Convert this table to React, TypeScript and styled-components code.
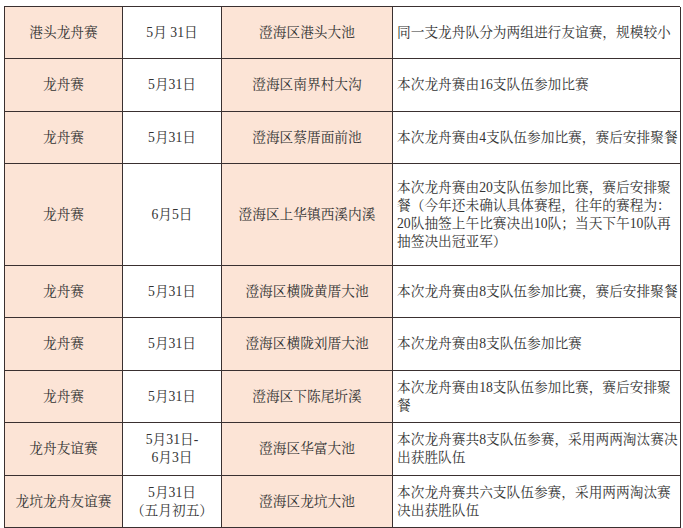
import React from "react";
import styled, { createGlobalStyle } from "styled-components";

const Global = createGlobalStyle`
  html, body { margin: 0; padding: 0; background: #ffffff; }
  body {
    font-family: "Liberation Serif", "Noto Serif CJK SC", "Noto Sans CJK SC", serif;
    color: #333333;
  }
`;

const Page = styled.div`
  padding: 6px 0 0 4px;
`;

const Grid = styled.div<{ $rows: number[] }>`
  display: grid;
  grid-template-columns: 118px 99px 171px 288px;
  grid-template-rows: ${(p) => p.$rows.map((h) => `${h}px`).join(" ")};
  width: 676px;
  box-sizing: border-box;
  border-top: 1px solid #3a3030;
  border-left: 1px solid #3a3030;
  font-size: 13.7px;
  line-height: 18px;
`;

const Cell = styled.div<{ $pink?: boolean; $left?: boolean }>`
  display: flex;
  align-items: center;
  justify-content: ${(p) => (p.$left ? "flex-start" : "center")};
  text-align: ${(p) => (p.$left ? "left" : "center")};
  box-sizing: border-box;
  border-right: 1px solid #3a3030;
  border-bottom: 1px solid #3a3030;
  background: ${(p) => (p.$pink ? "#fce4d6" : "#ffffff")};
  padding: ${(p) => (p.$left ? "0 0 0 4px" : "0 2px")};
  white-space: nowrap;
  overflow: hidden;
  color: #333333;
`;

type R = { h: number; name: string; date: string[]; place: string; desc: string[] };

const rows: R[] = [
  { h: 52, name: "港头龙舟赛", date: ["5月 31日"], place: "澄海区港头大池", desc: ["同一支龙舟队分为两组进行友谊赛，规模较小"] },
  { h: 53, name: "龙舟赛", date: ["5月31日"], place: "澄海区南界村大沟", desc: ["本次龙舟赛由16支队伍参加比赛"] },
  { h: 52, name: "龙舟赛", date: ["5月31日"], place: "澄海区蔡厝面前池", desc: ["本次龙舟赛由4支队伍参加比赛，赛后安排聚餐"] },
  {
    h: 102,
    name: "龙舟赛",
    date: ["6月5日"],
    place: "澄海区上华镇西溪内溪",
    desc: [
      "本次龙舟赛由20支队伍参加比赛，赛后安排聚",
      "餐（今年还未确认具体赛程，往年的赛程为：",
      "20队抽签上午比赛决出10队；当天下午10队再",
      "抽签决出冠亚军）",
    ],
  },
  { h: 52, name: "龙舟赛", date: ["5月31日"], place: "澄海区横陇黄厝大池", desc: ["本次龙舟赛由8支队伍参加比赛，赛后安排聚餐"] },
  { h: 53, name: "龙舟赛", date: ["5月31日"], place: "澄海区横陇刘厝大池", desc: ["本次龙舟赛由8支队伍参加比赛"] },
  { h: 52, name: "龙舟赛", date: ["5月31日"], place: "澄海区下陈尾圻溪", desc: ["本次龙舟赛由18支队伍参加比赛，赛后安排聚", "餐"] },
  { h: 53, name: "龙舟友谊赛", date: ["5月31日-", "6月3日"], place: "澄海区华富大池", desc: ["本次龙舟赛共8支队伍参赛，采用两两淘汰赛决", "出获胜队伍"] },
  { h: 52, name: "龙坑龙舟友谊赛", date: ["5月31日", "（五月初五）"], place: "澄海区龙坑大池", desc: ["本次龙舟赛共六支队伍参赛，采用两两淘汰赛", "决出获胜队伍"] },
];

const Lines = ({ lines }: { lines: string[] }) => (
  <div>
    {lines.map((l, i) => (
      <React.Fragment key={i}>
        {i > 0 && <br />}
        {l}
      </React.Fragment>
    ))}
  </div>
);

export default function App() {
  return (
    <Page>
      <Global />
      <Grid $rows={rows.map((r) => r.h)}>
        {rows.map((r, i) => (
          <React.Fragment key={i}>
            <Cell $pink>{r.name}</Cell>
            <Cell>
              <Lines lines={r.date} />
            </Cell>
            <Cell $pink>{r.place}</Cell>
            <Cell $left>
              <Lines lines={r.desc} />
            </Cell>
          </React.Fragment>
        ))}
      </Grid>
    </Page>
  );
}
